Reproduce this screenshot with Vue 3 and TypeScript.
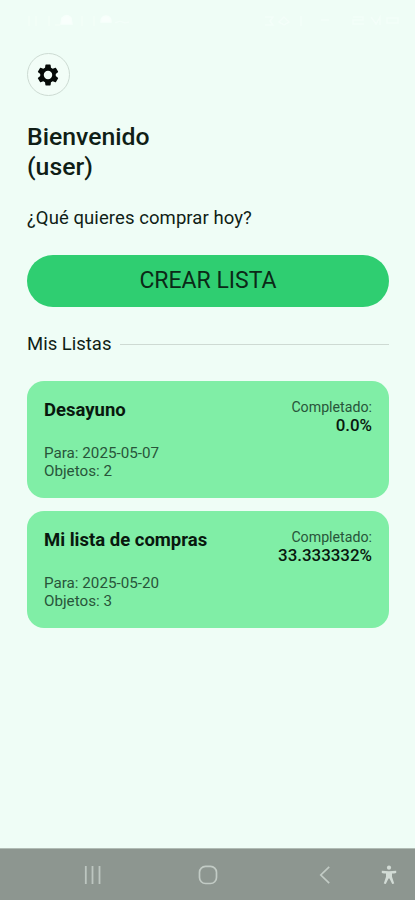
<script setup lang="ts">
interface ShoppingList {
  name: string
  date: string
  items: number
  completed: string
}

const lists: ShoppingList[] = [
  { name: 'Desayuno', date: '2025-05-07', items: 2, completed: '0.0%' },
  { name: 'Mi lista de compras', date: '2025-05-20', items: 3, completed: '33.333332%' },
]
</script>

<template>
  <div class="screen">
    <header class="status" aria-hidden="true">
      <svg width="104" height="18" viewBox="0 0 104 18" fill="none" stroke="#f7fffb" stroke-width="1.5">
        <path d="M4 4v10M11 4v10M24 4v10M30 13h5M57 4v10M69 4v10M90 11l5-2 5 2 4-1" opacity=".5" />
        <path d="M36 12l1-6q5-5 9 0l1 6zM76 10q0-6 5-6t5 6z" fill="#f9fffc" />
      </svg>
      <svg width="138" height="18" viewBox="0 0 138 18" fill="none" stroke="#f7fffb" stroke-width="1.5">
        <path d="M2 5h8l-3 4 3 4H2M16 10l5-5 5 5-5 3zM38 4v10M58 8h8M90 5h10v3H90v4h11M108 5l5 7 4-7v8M124 6h11v5h-11z" opacity=".6" />
      </svg>
    </header>

    <main class="content">
      <button class="settings" type="button" aria-label="Ajustes">
        <svg width="26" height="26" viewBox="0 0 24 24">
          <path
            fill="#060b08"
            d="M19.14 12.94c.04-.3.06-.61.06-.94s-.02-.64-.07-.94l2.03-1.58a.49.49 0 0 0 .12-.61l-1.92-3.32a.49.49 0 0 0-.59-.22l-2.39.96a7 7 0 0 0-1.62-.94l-.36-2.54a.48.48 0 0 0-.48-.41h-3.84a.47.47 0 0 0-.47.41l-.36 2.54c-.59.24-1.13.57-1.62.94l-2.39-.96a.48.48 0 0 0-.59.22L2.74 8.87a.47.47 0 0 0 .12.61l2.03 1.58c-.05.3-.09.63-.09.94s.02.64.07.94l-2.03 1.58a.49.49 0 0 0-.12.61l1.92 3.32c.12.22.37.29.59.22l2.39-.96c.5.38 1.03.7 1.62.94l.36 2.54c.05.24.24.41.48.41h3.84c.24 0 .44-.17.47-.41l.36-2.54a7 7 0 0 0 1.62-.94l2.39.96c.22.08.47 0 .59-.22l1.92-3.32a.47.47 0 0 0-.12-.61zM12 15.900A3.900 3.900 0 1 1 12 8.100a3.900 3.900 0 0 1 0 7.800z"
          />
        </svg>
      </button>

      <h1 class="welcome">Bienvenido<br />(user)</h1>
      <p class="question">¿Qué quieres comprar hoy?</p>
      <button class="create" type="button">CREAR LISTA</button>

      <div class="section">
        <h2 class="section-title">Mis Listas</h2>
        <span class="rule"></span>
      </div>

      <div class="lists">
        <article v-for="list in lists" :key="list.name" class="card">
          <div class="info">
            <h3 class="name">{{ list.name }}</h3>
            <p class="detail">Para: {{ list.date }}</p>
            <p class="detail">Objetos: {{ list.items }}</p>
          </div>
          <div class="progress">
            <p class="label">Completado:</p>
            <p class="value">{{ list.completed }}</p>
          </div>
        </article>
      </div>
    </main>

    <nav class="navbar">
      <svg class="recents" width="18" height="18" viewBox="0 0 18 18" stroke="#bdc6c0" stroke-width="1.8">
        <path d="M1.800 0v18M8.500 0v18M15.500 0v18" />
      </svg>
      <svg class="home" width="20" height="20" viewBox="0 0 20 20" fill="none" stroke="#c2cbc5" stroke-width="1.700">
        <rect x="1.500" y="1.300" width="17" height="17.200" rx="6" />
      </svg>
      <svg class="back" width="12" height="18" viewBox="0 0 12 18" fill="none" stroke="#c2cbc5" stroke-width="1.700">
        <path d="M10.200 .8 1.800 9l8.400 8.200" />
      </svg>
      <svg class="access" width="16" height="20" viewBox="0 0 16 20" fill="#d2dbd5">
        <circle cx="8" cy="2.700" r="2.100" />
        <path d="M.8 5.700Q8 6.600 15.200 5.700v2.200q-2.200.6-4.200.6v3.300l2.200 6.600-2 .7L8.500 13.500h-1l-2.700 5.600-2-.7 2.200-6.600V8.500q-2 0-4.200-.6z" />
      </svg>
    </nav>
  </div>
</template>

<style>
body {
  margin: 0;
  background: #effdf6;
}
</style>

<style scoped>
.screen {
  box-sizing: border-box;
  display: flex;
  flex-direction: column;
  width: 100%;
  height: 900px;
  background: #effdf6;
  color: #101e16;
  font-family: Roboto, 'Liberation Sans', sans-serif;
}

h1,
h2,
h3,
p {
  margin: 0;
}

.status {
  display: flex;
  justify-content: space-between;
  height: 41px;
  padding: 12px 14px 0 25px;
  box-sizing: border-box;
}

.content {
  flex: 1;
  padding: 12px 26px 0 27px;
}

.settings {
  display: grid;
  place-items: center;
  box-sizing: border-box;
  width: 43px;
  height: 43px;
  padding: 0 1px 0 0;
  border: 1px solid #cddbd3;
  border-radius: 50%;
  background: #f2fdf7;
}

.welcome {
  margin-top: 26px;
  font-size: 24.800px;
  font-weight: 500;
  line-height: 30px;
}

.question {
  margin-top: 26px;
  font-size: 18.500px;
  font-weight: 400;
  letter-spacing: 0.08px;
  line-height: 21px;
}

.create {
  display: block;
  width: 100%;
  height: 52px;
  margin-top: 26px;
  padding: 0;
  border: 0;
  border-radius: 26px;
  background: #2fce71;
  color: #0b2917;
  font-family: inherit;
  font-size: 23px;
  line-height: 52px;
}

.section {
  display: flex;
  align-items: center;
  gap: 9px;
  height: 22px;
  margin-top: 26px;
}

.section-title {
  font-size: 18.500px;
  font-weight: 400;
  line-height: 22px;
}

.rule {
  flex: 1;
  height: 1px;
  background: #cedad3;
}

.lists {
  display: flex;
  flex-direction: column;
  gap: 13.500px;
  margin-top: 26.300px;
}

.card {
  display: flex;
  justify-content: space-between;
  box-sizing: border-box;
  height: 116.500px;
  padding: 17px 17px 0;
  border-radius: 17px;
  background: #80eea6;
}

.info {
  padding-top: 1px;
}

.name {
  margin-bottom: 22.500px;
  color: #08180e;
  font-size: 18.500px;
  font-weight: 700;
  line-height: 22px;
}

.detail {
  color: #28553a;
  font-size: 15.200px;
  line-height: 18.500px;
}

.progress {
  text-align: right;
}

.label {
  color: #28553a;
  font-size: 14.200px;
  line-height: 18px;
}

.value {
  color: #08180e;
  font-size: 16.900px;
  font-weight: 500;
  line-height: 19px;
}

.navbar {
  display: flex;
  align-items: center;
  box-sizing: border-box;
  height: 52px;
  padding-left: 84px;
  border-top: 1px solid #b1bcb5;
  background: #8d9690;
}

.home {
  margin-left: 96px;
}

.back {
  margin-left: 101px;
}

.access {
  margin-left: 50px;
}
</style>
